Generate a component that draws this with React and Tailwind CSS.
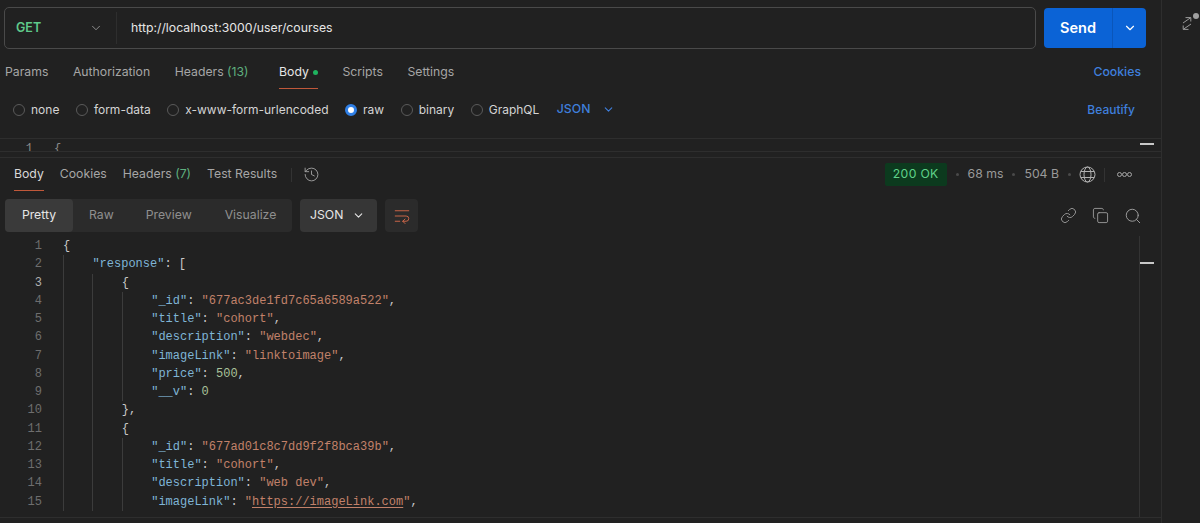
import React from 'react';
import { ChevronDown, Copy, History, Link, Search, WrapText } from 'lucide-react';

const requestTabs = [
  { label: 'Params' },
  { label: 'Authorization' },
  { label: 'Headers', count: '(13)' },
  { label: 'Body', active: true, dot: true },
  { label: 'Scripts' },
  { label: 'Settings' },
];

const bodyTypes = ['none', 'form-data', 'x-www-form-urlencoded', 'raw', 'binary', 'GraphQL'];

const Key = ({ children }) => <span className="text-[#7fb5d6]">"{children}"</span>;
const Str = ({ children }) => <span className="text-[#c2816a]">"{children}"</span>;
const Num = ({ children }) => <span className="text-[#a9c29a]">{children}</span>;

const codeLines = [
  { depth: 0, body: '{' },
  { depth: 1, body: <><Key>response</Key>: [</> },
  { depth: 2, body: '{', current: true },
  { depth: 3, body: <><Key>_id</Key>: <Str>677ac3de1fd7c65a6589a522</Str>,</> },
  { depth: 3, body: <><Key>title</Key>: <Str>cohort</Str>,</> },
  { depth: 3, body: <><Key>description</Key>: <Str>webdec</Str>,</> },
  { depth: 3, body: <><Key>imageLink</Key>: <Str>linktoimage</Str>,</> },
  { depth: 3, body: <><Key>price</Key>: <Num>500</Num>,</> },
  { depth: 3, body: <><Key>__v</Key>: <Num>0</Num></> },
  { depth: 2, body: '},' },
  { depth: 2, body: '{' },
  { depth: 3, body: <><Key>_id</Key>: <Str>677ad01c8c7dd9f2f8bca39b</Str>,</> },
  { depth: 3, body: <><Key>title</Key>: <Str>cohort</Str>,</> },
  { depth: 3, body: <><Key>description</Key>: <Str>web dev</Str>,</> },
  {
    depth: 3,
    body: (
      <>
        <Key>imageLink</Key>: <span className="text-[#c2816a]">"<span className="underline underline-offset-2">https://imageLink.com</span>"</span>,
      </>
    ),
  },
];

const CodeLine = ({ number, depth, body, current }) => (
  <div className="flex h-[18.25px] items-stretch leading-[18.25px]">
    <span className={`w-[42px] shrink-0 text-right ${current ? 'text-[#b0b0b0]' : 'text-[#6e6e6e]'}`}>{number}</span>
    <span className="ml-[21px] flex whitespace-pre text-[#c8c8c8]">
      {Array.from({ length: depth }).map((_, i) => (
        <span key={i} className="w-[29.4px] shrink-0 border-l border-[#3c3c3c]" />
      ))}
      <span>{body}</span>
    </span>
  </div>
);

const ExpandIcon = () => (
  <svg width="10" height="13" viewBox="0 0 10 13" fill="none" stroke="#9a9a9a" strokeWidth="1">
    <path d="M1 6 L8.5 0.8 M3.5 0.6 H8.8 V4.5" />
    <path d="M9 7 L1.5 12.2 M6.5 12.4 H1.2 V8.5" />
  </svg>
);

const GlobeIcon = () => (
  <svg width="17" height="17" viewBox="0 0 17 17" fill="none" stroke="#b0b0b0" strokeWidth="1">
    <circle cx="8.5" cy="8.5" r="7.5" />
    <ellipse cx="8.5" cy="8.5" rx="3.5" ry="7.5" />
    <path d="M1.8 5.5 H15.2 M1.8 11.5 H15.2" />
  </svg>
);

const App = () => {
  return (
    <div className="flex h-[523px] w-[1200px] overflow-hidden bg-[#212121] font-['Inter',sans-serif] text-[12.25px] text-[#a6a6a6]">
      <div className="flex w-[1162px] shrink-0 flex-col border-r border-[#2e2e2e]">
        {/* URL bar */}
        <div className="flex h-[56px] shrink-0 items-start gap-2 pl-1 pr-[15px] pt-[7px]">
          <div className="flex h-[42px] flex-1 items-center rounded-[5px] border border-[#4a4a4a]">
            <span className="w-[84px] pl-[11px] text-[12.5px] font-semibold text-[#5fc98a]">GET</span>
            <ChevronDown size={14} strokeWidth={1.5} className="text-[#9a9a9a]" />
            <span className="ml-[13px] mr-[14px] h-[32px] w-px bg-[#2e2e2e]" />
            <span className="text-[12.25px] text-[#e6e6e6]">http://localhost:3000/user/courses</span>
          </div>
          <div className="mt-px flex h-[40px] w-[102px] rounded-[4px] bg-[#0b63d6] text-white">
            <span className="flex w-[69px] items-center justify-center border-r border-[#0a56ba] text-[14.5px] font-semibold">Send</span>
            <span className="flex flex-1 items-center justify-center"><ChevronDown size={14} /></span>
          </div>
        </div>

        {/* Request tabs */}
        <div className="flex h-[33px] shrink-0 items-center justify-between pl-[5px] pr-5">
          <div className="flex gap-[24.5px]">
            {requestTabs.map((tab) => (
              <div
                key={tab.label}
                className={`flex h-[33px] items-center gap-1 border-b ${tab.active ? 'border-[#c0583a] text-[#e6e6e6]' : 'border-transparent'}`}
              >
                <span>
                  {tab.label}
                  {tab.count && <span className="mr-[6px] text-[#5fb07f]"> {tab.count}</span>}
                </span>
                {tab.dot && <span className="h-[5px] w-[5px] rounded-full bg-[#1fb35f]" />}
              </div>
            ))}
          </div>
          <span className="font-medium text-[#3f7fdc]">Cookies</span>
        </div>

        {/* Body type row */}
        <div className="flex h-[41px] shrink-0 items-center justify-between pl-[13px] pr-[26px]">
          <div className="flex items-center text-[12px]">
            {bodyTypes.map((type) => (
              <div key={type} className="mr-[16.5px] flex items-center gap-[6px] text-[#d4d4d4]">
                {type === 'raw' ? (
                  <span className="h-[12px] w-[12px] rounded-full border-[3px] border-[#2f7fe6] bg-white" />
                ) : (
                  <span className="h-[12px] w-[12px] rounded-full border border-[#5a5a5a]" />
                )}
                <span>{type}</span>
              </div>
            ))}
            <span className="ml-px flex items-center gap-[12px] text-[12.25px] font-medium text-[#3f7fdc]">
              JSON <ChevronDown size={13} />
            </span>
          </div>
          <span className="text-[12px] font-medium text-[#3f7fdc]">Beautify</span>
        </div>

        {/* Collapsed request editor */}
        <div className="relative mt-[8px] h-[14px] shrink-0 overflow-hidden border-y border-[#2e2e2e] font-['Liberation_Mono',monospace] text-[12px] leading-[18px] text-[#8a8a8a]">
          <div className="flex pt-[1px]">
            <span className="w-[33px] shrink-0 text-right">1</span>
            <span className="ml-[21px]">{'{'}</span>
          </div>
          <span className="absolute right-[7px] top-[4px] h-[2px] w-[14px] bg-[#c8c8c8]" />
        </div>

        {/* Response header */}
        <div className="mt-[5px] flex h-[34px] shrink-0 items-center justify-between border-t border-[#2e2e2e] pl-[14px] pr-[29px]">
          <div className="flex items-center gap-4">
            <span className="flex h-[33px] items-center border-b border-[#c0583a] text-[#d8d8d8]">Body</span>
            <span>Cookies</span>
            <span>Headers <span className="text-[#5fb07f]">(7)</span></span>
            <span>Test Results</span>
            <span className="-ml-[2px] h-[14px] w-px bg-[#333333]" />
            <History size={17} strokeWidth={1.25} className="-ml-[5px] text-[#a6a6a6]" />
          </div>
          <div className="flex items-center text-[#9a9a9a]">
            <span className="rounded-[2px] bg-[#0c3a1e] px-2 py-[2px] tracking-[0.3px] text-[#5fd28a]">200 OK</span>
            <span className="mx-[9px] h-[3px] w-[3px] rounded-full bg-[#4a4a4a]" />
            <span>68 ms</span>
            <span className="mx-[9px] h-[3px] w-[3px] rounded-full bg-[#4a4a4a]" />
            <span>504 B</span>
            <span className="mx-[8.5px] h-[3px] w-[3px] rounded-full bg-[#4a4a4a]" />
            <GlobeIcon />
            <span className="mx-[8px] h-[14px] w-px bg-[#333333]" />
            <span className="ml-1 flex">
              <span className="h-[5px] w-[5px] rounded-full border border-[#a6a6a6]" />
              <span className="h-[5px] w-[5px] rounded-full border border-[#a6a6a6]" />
              <span className="h-[5px] w-[5px] rounded-full border border-[#a6a6a6]" />
            </span>
          </div>
        </div>

        {/* Response toolbar */}
        <div className="mt-[8px] flex h-[33px] shrink-0 items-center pl-[5px] pr-[19px]">
          <div className="flex h-[33px] w-[287px] items-center rounded-[4px] bg-[#2b2b2b]">
            <span className="flex h-full w-[68px] items-center justify-center rounded-[4px] bg-[#3a3a3a] text-[#e6e6e6]">Pretty</span>
            <span className="ml-[16px] text-[#8f8f8f]">Raw</span>
            <span className="ml-[32px] text-[#8f8f8f]">Preview</span>
            <span className="ml-[33px] text-[#8f8f8f]">Visualize</span>
          </div>
          <div className="ml-[8px] flex h-[33px] w-[77px] items-center rounded-[4px] bg-[#363636] pl-[10px] text-[#e6e6e6]">
            JSON
            <ChevronDown size={13} className="ml-[9px]" />
          </div>
          <div className="ml-[8px] flex h-[33px] w-[33px] items-center justify-center rounded-[4px] bg-[#2b2b2b]">
            <WrapText size={18} strokeWidth={1.25} className="text-[#d2694a]" />
          </div>
          <div className="ml-auto flex items-center gap-[15px] text-[#a0a0a0]">
            <Link size={17} strokeWidth={1.25} />
            <Copy size={17} strokeWidth={1.25} />
            <Search size={18} strokeWidth={1.25} />
          </div>
        </div>

        {/* Response code */}
        <div className="relative mt-[4px] h-[282px] shrink-0 overflow-hidden border-b border-[#2e2e2e] pt-[1px] font-['Liberation_Mono',monospace] text-[12px]">
          {codeLines.map((line, i) => (
            <CodeLine key={i} number={i + 1} {...line} />
          ))}
          <span className="absolute bottom-0 right-[21px] top-0 w-px bg-[#333333]" />
          <span className="absolute right-[7px] top-[26px] h-[2px] w-[14px] bg-[#c8c8c8]" />
        </div>
      </div>

      {/* Right rail */}
      <div className="relative flex-1">
        <span className="absolute left-[20px] top-[17px]"><ExpandIcon /></span>
        <span className="absolute left-[31px] top-[13px] h-[6px] w-[6px] rounded-full bg-[#a0a0a0]" />
      </div>
    </div>
  );
};

export default App;
